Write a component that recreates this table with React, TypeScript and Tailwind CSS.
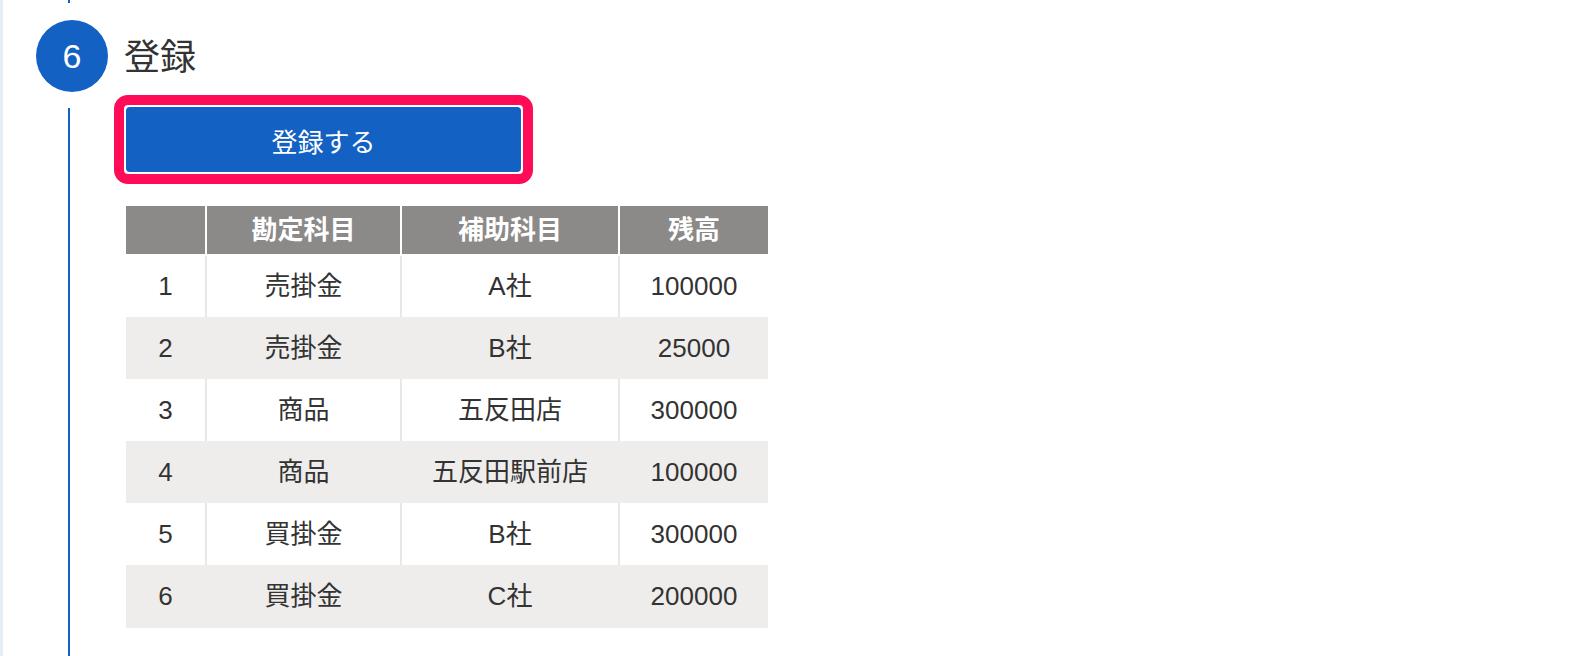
import React from "react";

const BLUE = "bg-[#1461c4]";

const rows: { n: string; a: string; b: string; c: string }[] = [
  { n: "1", a: "売掛金", b: "A社", c: "100000" },
  { n: "2", a: "売掛金", b: "B社", c: "25000" },
  { n: "3", a: "商品", b: "五反田店", c: "300000" },
  { n: "4", a: "商品", b: "五反田駅前店", c: "100000" },
  { n: "5", a: "買掛金", b: "B社", c: "300000" },
  { n: "6", a: "買掛金", b: "C社", c: "200000" },
];

function Row({ r, i }: { r: (typeof rows)[number]; i: number }) {
  const gray = i % 2 === 1;
  const h = i === 0 ? "h-[61px]" : i === rows.length - 1 ? "h-[63px]" : "h-[62px]";
  const rowCls = gray ? "bg-[#eeedeb]" : "bg-[#e9e8e6]";
  const cell = `flex items-center justify-center ${gray ? "bg-[#eeedeb]" : "bg-white"}`;
  return (
    <div className={`grid grid-cols-[79px_193px_216px_148px] gap-x-[2px] ${h} ${rowCls}`}>
      <div className={cell}>{r.n}</div>
      <div className={cell}>{r.a}</div>
      <div className={cell}>{r.b}</div>
      <div className={cell}>{r.c}</div>
    </div>
  );
}

export default function App() {
  return (
    <div className="flex h-[656px] w-[1584px] overflow-hidden bg-white font-['Liberation_Sans','Noto_Sans_CJK_JP',sans-serif] text-[#333333]">
      <div className="w-[3px] shrink-0 bg-[#e4ecf6]" />
      <div className="flex flex-1 flex-col">
        <div className={`ml-[65px] h-[3px] w-[2px] ${BLUE}`} />
        <div className="flex h-[92px] items-start pl-[33px] pt-[17px]">
          <div className={`flex h-[72px] w-[72px] items-center justify-center rounded-full ${BLUE} text-[34px] text-white`}>
            6
          </div>
          <h2 className="ml-[16px] pt-[2px] text-[36px] leading-[72px]">登録</h2>
        </div>
        <div className="flex flex-1">
          <div className={`ml-[65px] mt-[13px] w-[2px] ${BLUE}`} />
          <div className="pl-[44px]">
            <div className="w-[419px] rounded-[14px] border-[10px] border-[#ff0b58] bg-white p-[2px]">
              <button className={`flex h-[65px] w-full items-center justify-center rounded-[4px] pt-[7px] ${BLUE} text-[26px] text-white`}>
                登録する
              </button>
            </div>
            <div className="ml-[12px] mt-[22px] flex w-[642px] flex-col text-[26px]">
              <div className="grid h-[48px] grid-cols-[79px_193px_216px_148px] gap-x-[2px] bg-white font-bold text-white">
                <div className="bg-[#8b8a88]" />
                <div className="flex items-center justify-center bg-[#8b8a88]">勘定科目</div>
                <div className="flex items-center justify-center bg-[#8b8a88]">補助科目</div>
                <div className="flex items-center justify-center bg-[#8b8a88]">残高</div>
              </div>
              <div className="h-[2px] bg-white" />
              {rows.map((r, i) => (
                <Row key={i} r={r} i={i} />
              ))}
            </div>
          </div>
        </div>
      </div>
    </div>
  );
}
